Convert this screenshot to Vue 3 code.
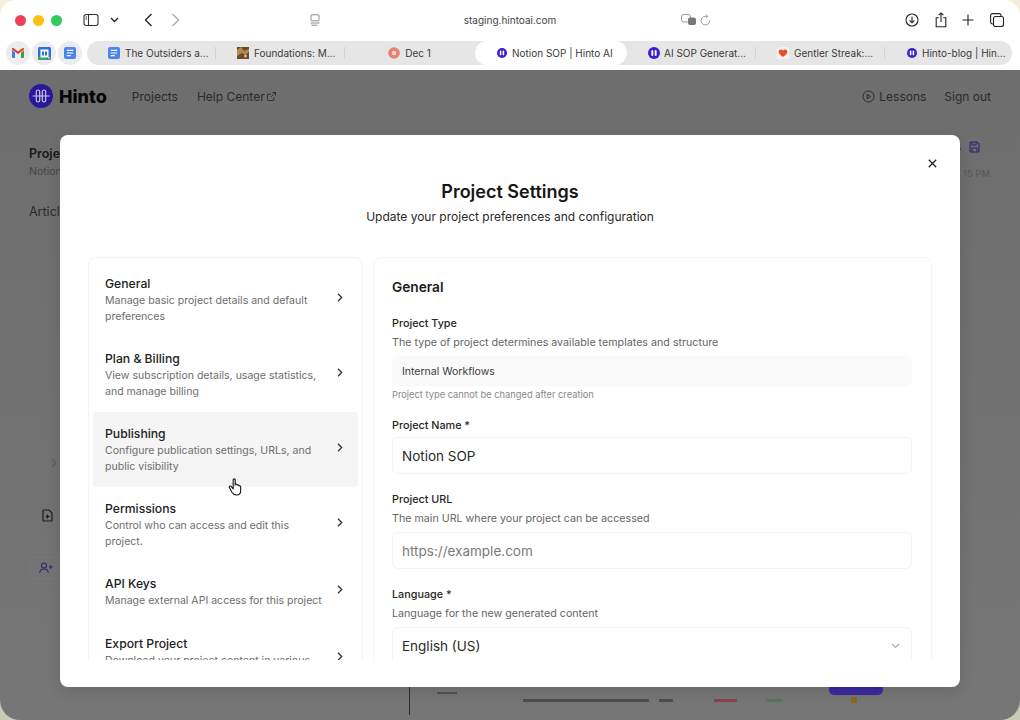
<script setup>
/**
 * Browser window with the Project Settings modal open
 */

const tabs = [
  { title: 'The Outsiders a...', icon: 'doc', sep: true },
  { title: 'Foundations: M...', icon: 'photo', sep: true },
  { title: 'Dec 1', icon: 'ring', center: true },
  { title: 'Notion SOP | Hinto AI', icon: 'hinto', active: true },
  { title: 'AI SOP Generat...', icon: 'hinto', sep: true, big: true },
  { title: 'Gentler Streak:...', icon: 'heart', sep: true },
  { title: 'Hinto-blog | Hin...', icon: 'hinto', last: true },
]

const sections = [
  { title: 'General', desc: 'Manage basic project details and default preferences' },
  { title: 'Plan & Billing', desc: 'View subscription details, usage statistics, and manage billing' },
  { title: 'Publishing', desc: 'Configure publication settings, URLs, and public visibility', hover: true },
  { title: 'Permissions', desc: 'Control who can access and edit this project.' },
  { title: 'API Keys', desc: 'Manage external API access for this project' },
  { title: 'Export Project', desc: 'Download your project content in various formats' },
]
</script>

<template>
  <div class="desk">
    <div class="window">
      <header class="chrome">
        <div class="toolbar">
          <div class="tool-left">
            <span class="light red"></span>
            <span class="light yellow"></span>
            <span class="light green"></span>
            <svg class="sidebar-icon" width="16" height="14" viewBox="0 0 16 14" fill="none" stroke="#333" stroke-width="1.1">
              <rect x="1" y="1.5" width="14" height="11" rx="2.2" />
              <path d="M5.5 1.5v11M2.6 4h1.4M2.6 6h1.4" />
            </svg>
            <svg class="menu-chevron" width="9" height="6" viewBox="0 0 9 6" fill="none" stroke="#222" stroke-width="1.3">
              <path d="M1 1l3.5 3.5L8 1" />
            </svg>
            <svg class="back" width="9" height="14" viewBox="0 0 9 14" fill="none" stroke="#222" stroke-width="1.3">
              <path d="M7.5 1L1.5 7l6 6" />
            </svg>
            <svg class="forward" width="9" height="14" viewBox="0 0 9 14" fill="none" stroke="#aaa" stroke-width="1.3">
              <path d="M1.5 1l6 6-6 6" />
            </svg>
          </div>
          <div class="address">
            <svg class="page-icon" width="10" height="12" viewBox="0 0 10 12" fill="none" stroke="#8a8a8a" stroke-width="1">
              <rect x="1" y="0.8" width="8" height="6" rx="0.8" />
              <path d="M0.5 9h9M1.5 11.2h6" />
            </svg>
            <span class="url">staging.hintoai.com</span>
            <svg class="translate" width="16" height="12" viewBox="0 0 16 12">
              <rect x="0.5" y="0.5" width="9" height="7.5" rx="2.5" fill="#fff" stroke="#999" />
              <rect x="7" y="3.5" width="8" height="7.5" rx="2" fill="#777" />
            </svg>
            <svg class="reload" width="11" height="12" viewBox="0 0 11 12" fill="none" stroke="#9a9a9a" stroke-width="1">
              <path d="M9.7 6.6A4.3 4.3 0 1 1 5.4 2.3h2" />
              <path d="M6 0.6l1.7 1.7L6 4" />
            </svg>
          </div>
          <div class="tool-right">
            <svg width="14" height="14" viewBox="0 0 14 14" fill="none" stroke="#222" stroke-width="1.1">
              <circle cx="7" cy="7" r="6" />
              <path d="M7 3.6v6M4.6 7.4L7 9.8l2.4-2.4" />
            </svg>
            <svg width="12" height="16" viewBox="0 0 12 16" fill="none" stroke="#222" stroke-width="1.1">
              <path d="M3.8 5.8H1.2v9h9.6v-9H8.2M6 10V1M3.6 3.2L6 0.9l2.4 2.3" />
            </svg>
            <svg width="12" height="12" viewBox="0 0 12 12" fill="none" stroke="#222" stroke-width="1.1">
              <path d="M6 0.5v11M0.5 6h11" />
            </svg>
            <svg width="14" height="14" viewBox="0 0 14 14" fill="none" stroke="#222" stroke-width="1.1">
              <rect x="3.5" y="3.5" width="10" height="10" rx="2" />
              <path d="M3.5 11H2.6A2 2 0 0 1 0.6 9V2.6a2 2 0 0 1 2-2H9a2 2 0 0 1 2 2v0.9" />
            </svg>
          </div>
        </div>

        <div class="tabbar">
          <div class="pinned">
            <span class="pin">
              <svg width="12" height="10" viewBox="0 0 12 10">
                <path d="M0 2v7a1 1 0 0 0 1 1h2V4.5z" fill="#3f7de8" />
                <path d="M12 2v7a1 1 0 0 1-1 1H9V4.5z" fill="#2ea44f" />
                <path d="M0 1.5L6 6l6-4.5V1a1 1 0 0 0-1.6-.8L6 3.5 1.6.2A1 1 0 0 0 0 1z" fill="#e0352b" />
                <path d="M9 3.4L12 1.2V2.6L9 4.8z" fill="#f5b91e" />
              </svg>
            </span>
            <span class="pin">
              <svg width="13" height="13" viewBox="0 0 13 13">
                <rect width="13" height="13" rx="1.5" fill="#2f6fe4" />
                <rect y="10" width="9" height="3" fill="#3aa757" />
                <path d="M10 10h3L10 13z" fill="#e9b21c" />
                <rect x="2.5" y="2.5" width="8" height="8" fill="#fff" />
                <rect x="4" y="4.5" width="2" height="4" fill="#2f6fe4" />
                <rect x="7" y="4.5" width="2" height="4" fill="#2f6fe4" />
              </svg>
            </span>
            <span class="pin">
              <svg width="12" height="12" viewBox="0 0 12 12">
                <rect width="12" height="12" rx="2" fill="#4b84ea" />
                <path d="M2.8 3.4h6.4M2.8 6h6.4M2.8 8.6h4" stroke="#fff" stroke-width="1.1" />
              </svg>
            </span>
          </div>

          <div class="tabs">
            <div
              v-for="tab in tabs"
              :key="tab.title"
              class="tab"
              :class="{ active: tab.active, sep: tab.sep, center: tab.center, last: tab.last, big: tab.big }"
            >
              <svg v-if="tab.icon === 'doc'" class="fav" width="12" height="12" viewBox="0 0 12 12">
                <rect width="12" height="12" rx="2" fill="#4b84ea" />
                <path d="M2.8 3.4h6.4M2.8 6h6.4M2.8 8.6h4" stroke="#fff" stroke-width="1.1" />
              </svg>
              <svg v-else-if="tab.icon === 'photo'" class="fav" width="12" height="12" viewBox="0 0 12 12">
                <rect width="12" height="12" fill="#6b4a2c" />
                <path d="M0 3l4-3 3 4 5-2v3L8 8l-3-2-5 3z" fill="#b08a4e" />
                <circle cx="8.5" cy="9" r="1.5" fill="#d8b878" />
              </svg>
              <svg v-else-if="tab.icon === 'ring'" class="fav" width="12" height="12" viewBox="0 0 12 12">
                <circle cx="6" cy="6" r="5.8" fill="#e9836f" />
                <circle cx="6" cy="6" r="2.2" fill="#f7d9d2" />
              </svg>
              <svg v-else-if="tab.icon === 'heart'" class="fav" width="12" height="12" viewBox="0 0 12 12">
                <rect width="12" height="12" rx="1.5" fill="#fbf3ef" />
                <path d="M6 10C3 8 1.6 6.6 1.6 4.8 1.6 3.5 2.6 2.6 3.7 2.6c1 0 1.8.5 2.3 1.2.5-.7 1.3-1.2 2.3-1.2 1.1 0 2.1.9 2.1 2.2C10.4 6.6 9 8 6 10z" fill="#e8502c" />
              </svg>
              <svg v-else class="fav" :width="tab.big ? 12 : 10" :height="tab.big ? 12 : 10" viewBox="0 0 10 10">
                <circle cx="5" cy="5" r="5" fill="#3d1fd1" />
                <rect x="2.8" y="2.6" width="1.6" height="4.8" rx="0.8" fill="#fff" />
                <rect x="5.6" y="2.6" width="1.6" height="4.8" rx="0.8" fill="#fff" />
              </svg>
              <span class="tab-title">{{ tab.title }}</span>
            </div>
          </div>
        </div>
      </header>

      <main class="page">
        <nav class="topnav">
          <div class="brand">
            <svg width="24" height="24" viewBox="0 0 24 24">
              <circle cx="12" cy="12" r="12" fill="#2a189a" />
              <rect x="7.3" y="6" width="3.4" height="12" rx="1.7" fill="none" stroke="#c9c6e6" stroke-width="1.2" />
              <rect x="13.3" y="6" width="3.4" height="12" rx="1.7" fill="none" stroke="#c9c6e6" stroke-width="1.2" />
              <path d="M3.5 12h17" stroke="#c9c6e6" stroke-width="1" />
            </svg>
            <span class="brand-name">Hinto</span>
          </div>
          <a class="nav-link">Projects</a>
          <a class="nav-link help">
            Help Center
            <svg width="9" height="9" viewBox="0 0 9 9" fill="none" stroke="#2b2b2b" stroke-width="0.9">
              <path d="M6.8 5.2v2.6a.7.7 0 0 1-.7.7H1.2a.7.7 0 0 1-.7-.7V2.9a.7.7 0 0 1 .7-.7h2.600M5.4.5h3.100v3.100M8.500.5L4 5" />
            </svg>
          </a>
          <div class="nav-right">
            <a class="nav-link lessons">
              <svg width="13" height="13" viewBox="0 0 13 13" fill="none" stroke="#2b2b2b" stroke-width="1">
                <circle cx="6.5" cy="6.5" r="5.5" />
                <path d="M5.2 4.2l3.2 2.3-3.2 2.3z" />
              </svg>
              Lessons
            </a>
            <a class="nav-link">Sign out</a>
          </div>
        </nav>

        <div class="behind">
          <div class="behind-left">
            <div class="behind-title">Project</div>
            <div class="behind-sub">Notion SOP</div>
            <div class="behind-articles">Articles</div>
            <svg class="behind-chevron" width="6" height="10" viewBox="0 0 6 10" fill="none" stroke="#5c5c5c" stroke-width="1.2">
              <path d="M1 1l4 4-4 4" />
            </svg>
            <svg class="behind-doc" width="11" height="13" viewBox="0 0 11 13" fill="none" stroke="#1c1c1c" stroke-width="1.2">
              <path d="M1 2a1 1 0 0 1 1-1h5l3 3v7a1 1 0 0 1-1 1H2a1 1 0 0 1-1-1zM5.5 5.5v4M3.5 7.500h4" />
            </svg>
            <div class="behind-invite">
              <svg width="14" height="12" viewBox="0 0 14 12" fill="none" stroke="#2c2570" stroke-width="1.1">
                <circle cx="5" cy="3.5" r="2.5" />
                <path d="M0.8 11c0-2.4 1.9-4 4.2-4s4.2 1.6 4.2 4M10 5h3.500M11.7 3.3v3.400" />
              </svg>
            </div>
          </div>
          <div class="behind-right">
            <div class="behind-save">
              <span>Changes</span>
              <svg width="11" height="12" viewBox="0 0 11 12" fill="none" stroke="#2c2570" stroke-width="1.1">
                <path d="M1 2a1 1 0 0 1 1-1h6l2 2v7a1 1 0 0 1-1 1H2a1 1 0 0 1-1-1zM3 1v3h4V1M3 11V7h5v4" />
              </svg>
            </div>
            <span class="behind-time">15 PM</span>
          </div>
        </div>

        <div class="strip">
          <span class="strip-rule"></span>
          <span class="strip-note"></span>
          <span class="strip-bar row-text"></span>
          <span class="strip-bar row-size"></span>
          <span class="strip-bar red-bar"></span>
          <span class="strip-bar green-bar"></span>
          <span class="strip-dot"></span>
          <span class="strip-btn"></span>
        </div>

        <section class="modal">
          <svg class="close" width="9" height="9" viewBox="0 0 9 9" fill="none" stroke="#222" stroke-width="1.3">
            <path d="M0.8 0.8l7.4 7.4M8.2 0.8L0.8 8.2" />
          </svg>
          <h2 class="modal-title">Project Settings</h2>
          <p class="modal-sub">Update your project preferences and configuration</p>

          <div class="columns">
            <aside class="side">
              <div
                v-for="item in sections"
                :key="item.title"
                class="side-item"
                :class="{ hover: item.hover }"
              >
                <div class="side-text">
                  <div class="side-title">{{ item.title }}</div>
                  <div class="side-desc">{{ item.desc }}</div>
                </div>
                <svg class="side-chevron" width="6" height="9" viewBox="0 0 6 9" fill="none" stroke="#333" stroke-width="1.3">
                  <path d="M1 0.8l3.7 3.7L1 8.2" />
                </svg>
              </div>
            </aside>

            <div class="panel">
              <h3 class="panel-title">General</h3>

              <label class="label first">Project Type</label>
              <p class="help-text">The type of project determines available templates and structure</p>
              <div class="field readonly">Internal Workflows</div>
              <p class="hint">Project type cannot be changed after creation</p>

              <label class="label name">Project Name *</label>
              <div class="field large">Notion SOP</div>

              <label class="label url-label">Project URL</label>
              <p class="help-text">The main URL where your project can be accessed</p>
              <div class="field large placeholder">https://example.com</div>

              <label class="label lang">Language *</label>
              <p class="help-text">Language for the new generated content</p>
              <div class="field large select">
                English (US)
                <svg width="9" height="6" viewBox="0 0 9 6" fill="none" stroke="#aaa" stroke-width="1.1">
                  <path d="M1 1l3.5 3.5L8 1" />
                </svg>
              </div>
            </div>
          </div>

          <svg class="cursor" width="16" height="19" viewBox="0 0 16 19">
            <path
              d="M5.2 1.8c0-1.3 2-1.3 2 0v5.4l.3-1c.9-.4 1.7 0 1.8.8.8-.4 1.6 0 1.7.9.8-.3 1.7.2 1.7 1.2v3.3c0 2.600-1.7 4.600-4.300 4.600-2.400 0-3.500-1-4.500-2.700L1.400 9.600c-.7-1.200.8-2.200 1.700-1.200l2.100 2.400z"
              fill="#fff"
              stroke="#111"
              stroke-width="1.1"
              stroke-linejoin="round"
            />
          </svg>
        </section>
      </main>
    </div>
  </div>
</template>

<style>
html,
body {
  margin: 0;
  overflow: hidden;
}
</style>

<style scoped>
.desk {
  width: 1020px;
  height: 720px;
  overflow: hidden;
  background: linear-gradient(180deg, #f3efdc 0%, #e3e0cd 40%, #c6cbb6 100%);
  font-family: Inter, "Liberation Sans", sans-serif;
  color: #1f1f1f;
}

.window {
  height: 720px;
  display: flex;
  flex-direction: column;
  border-radius: 16px 16px 20px 20px;
  overflow: hidden;
}

.chrome {
  height: 70px;
  flex: none;
  background: #fff;
}

.toolbar {
  height: 41px;
  padding-bottom: 1px;
  box-sizing: border-box;
  display: flex;
  align-items: center;
}

.tool-left {
  width: 304px;
  flex: none;
  display: flex;
  align-items: center;
  padding-left: 15px;
  box-sizing: border-box;
}

.light {
  width: 11px;
  height: 11px;
  border-radius: 50%;
  margin-right: 7px;
}

.red {
  background: #ef4058;
}

.yellow {
  background: #fcc20f;
}

.green {
  background: #30cb58;
}

.sidebar-icon {
  margin-left: 14px;
}

.menu-chevron {
  margin-left: 11px;
}

.back {
  margin-left: 25px;
}

.forward {
  margin-left: 18px;
}

.address {
  width: 411px;
  flex: none;
  height: 26px;
  display: flex;
  align-items: center;
  padding-left: 6px;
  box-sizing: border-box;
}

.url {
  margin-left: 141px;
  font-size: 10px;
  color: #444;
  width: 98px;
  text-align: center;
  white-space: nowrap;
}

.translate {
  margin-left: 122px;
}

.reload {
  margin-left: 3px;
}

.tool-right {
  flex: 1;
  display: flex;
  align-items: center;
  justify-content: flex-end;
  gap: 15px;
  padding-right: 16px;
}

.tool-right svg:first-child {
  margin-right: 1px;
}

.tool-right svg:nth-child(3) {
  margin-right: 1px;
}

.tabbar {
  height: 24px;
  display: flex;
  align-items: center;
}

.pinned {
  width: 87px;
  flex: none;
  display: flex;
  gap: 2px;
  padding-left: 6px;
  box-sizing: border-box;
}

.pin {
  width: 24px;
  height: 24px;
  border-radius: 50%;
  background: #ececee;
  display: flex;
  align-items: center;
  justify-content: center;
}

.tabs {
  width: 925px;
  height: 24px;
  display: flex;
  border-radius: 12px;
  background: #e6e6e6;
}

.tab {
  width: 129px;
  flex: none;
  box-sizing: border-box;
  padding-left: 21px;
  display: flex;
  align-items: center;
  gap: 5px;
  font-size: 10px;
  color: #3a3a3a;
  white-space: nowrap;
  position: relative;
}

.tab.sep::after {
  content: "";
  position: absolute;
  right: 0;
  top: 6px;
  bottom: 6px;
  width: 1px;
  background: #d2d2d2;
}

.tab.center {
  justify-content: center;
  padding-left: 0;
}

.tab.active {
  width: 152px;
  background: #fff;
  border-radius: 12px;
  padding-left: 22px;
  margin-left: 1px;
}

.tab.big {
  gap: 4px;
}

.tab.last {
  width: 124px;
  padding-left: 22px;
}

.page {
  flex: 1;
  position: relative;
  display: flex;
  flex-direction: column;
  background: linear-gradient(180deg, #6e6e6e 0%, #727272 60%, #767676 100%);
}

.topnav {
  height: 52px;
  flex: none;
  display: flex;
  align-items: center;
  padding: 0 29px;
  font-size: 12px;
}

.brand {
  display: flex;
  align-items: center;
  gap: 6px;
  margin-right: 25px;
}

.brand-name {
  font-size: 18px;
  font-weight: 800;
  color: #050505;
}

.nav-link {
  color: #2b2b2b;
  display: flex;
  align-items: center;
  gap: 2px;
}

.help {
  margin-left: 19px;
}

.nav-right {
  margin-left: auto;
  display: flex;
  align-items: center;
  gap: 18px;
}

.lessons {
  gap: 4px;
}

.behind {
  flex: 1;
  display: flex;
  justify-content: space-between;
  padding: 0 30px 0 29px;
}

.behind-left {
  padding-top: 24px;
}

.behind-title {
  font-size: 12.5px;
  font-weight: 600;
  line-height: 16px;
  color: #1a1a1a;
}

.behind-sub {
  margin-top: 3px;
  font-size: 10.5px;
  line-height: 14px;
  color: #444;
}

.behind-articles {
  margin-top: 25px;
  font-size: 12.5px;
  line-height: 16px;
  color: #2a2a2a;
}

.behind-chevron {
  display: block;
  margin: 238px 0 0 22px;
}

.behind-doc {
  display: block;
  margin: 41px 0 0 13px;
}

.behind-invite {
  margin: 35px 0 0 0;
  width: 34px;
  height: 22px;
  border: 1px solid #777780;
  border-radius: 4px;
  display: flex;
  align-items: center;
  padding-left: 9px;
  box-sizing: border-box;
}

.behind-right {
  display: flex;
  flex-direction: column;
  align-items: flex-end;
  padding-top: 19px;
}

.behind-save {
  display: flex;
  align-items: center;
  gap: 8px;
  margin-right: 10px;
  font-size: 11px;
  line-height: 12px;
  color: #2c2570;
}

.behind-time {
  margin-top: 15px;
  font-size: 9.5px;
  color: #585858;
}

.strip {
  height: 33px;
  flex: none;
  display: flex;
  padding-left: 409px;
  position: relative;
}

.strip-rule {
  width: 1px;
  height: 28px;
  background: #2e2e2e;
  margin-right: 113px;
}

.strip-bar {
  height: 3px;
  margin-top: 12px;
  background: #4d4d4d;
  border-radius: 1px;
  filter: blur(0.6px);
}

.strip-note {
  position: absolute;
  left: 437px;
  top: 5px;
  width: 20px;
  height: 2px;
  background: #525252;
  filter: blur(0.6px);
}

.row-text {
  width: 126px;
}

.row-size {
  width: 14px;
  margin-left: 10px;
}

.red-bar {
  width: 23px;
  margin-left: 41px;
  background: #8a3f50;
}

.green-bar {
  width: 16px;
  margin-left: 29px;
  background: #4f7a58;
}

.strip-dot {
  position: absolute;
  left: 851px;
  top: 10px;
  width: 6px;
  height: 6px;
  background: #8a6a1e;
  filter: blur(0.6px);
}

.strip-btn {
  position: absolute;
  left: 829px;
  top: -3px;
  width: 54px;
  height: 11px;
  background: #3a2aa0;
  border-radius: 5px;
}

.modal {
  position: absolute;
  left: 60px;
  top: 65px;
  width: 900px;
  height: 552px;
  box-sizing: border-box;
  background: #fff;
  border-radius: 8px;
  padding: 0 28px;
  box-shadow: 0 4px 16px rgba(0, 0, 0, 0.12);
  display: flex;
  flex-direction: column;
  overflow: hidden;
}

.close {
  position: absolute;
  left: 868px;
  top: 24px;
}

.modal-title {
  margin: 46px 0 0;
  font-size: 18px;
  line-height: 22px;
  font-weight: 600;
  text-align: center;
  color: #161616;
}

.modal-sub {
  margin: 5px 0 0;
  font-size: 12px;
  line-height: 18px;
  text-align: center;
  color: #2a2a2a;
}

.columns {
  margin-top: 31px;
  height: 403px;
  display: flex;
  gap: 10px;
  overflow: hidden;
  flex: none;
}

.side {
  width: 275px;
  flex: none;
  box-sizing: border-box;
  border: 1px solid #f4f4f4;
  border-bottom: 0;
  border-radius: 8px 8px 0 0;
  padding: 4px 4px 0;
  overflow: hidden;
}

.side-item {
  display: flex;
  align-items: center;
  justify-content: space-between;
  padding: 14px 15px 13px 12px;
  border-radius: 4px;
}

.side-item.hover {
  background: #f5f5f5;
}

.side-text {
  width: 220px;
}

.side-title {
  font-size: 12.2px;
  line-height: 16px;
  font-weight: 500;
  color: #222;
  margin-bottom: 1px;
}

.side-desc {
  font-size: 10.55px;
  line-height: 15.5px;
  color: #6e6e6e;
}

.side-chevron {
  margin-bottom: 6px;
}

.panel {
  flex: 1;
  box-sizing: border-box;
  border: 1px solid #f6f6f6;
  border-bottom: 0;
  border-radius: 8px 8px 0 0;
  padding: 20px 20px 0 18px;
  overflow: hidden;
}

.panel-title {
  margin: 0;
  font-size: 13.7px;
  line-height: 18px;
  font-weight: 600;
  color: #1c1c1c;
}

.label {
  display: block;
  padding-top: 1px;
  font-size: 10.8px;
  line-height: 14px;
  font-weight: 500;
  color: #262626;
}

.first {
  margin-top: 20px;
}

.name {
  margin-top: 17px;
}

.name + .field {
  margin-top: 4px;
}

.url-label {
  margin-top: 18px;
}

.lang {
  margin-top: 18px;
}

.help-text {
  margin: 5px 0 0;
  font-size: 10.7px;
  line-height: 14px;
  color: #666;
}

.hint {
  margin: 3px 0 0;
  font-size: 9.3px;
  line-height: 12px;
  color: #8a8a8a;
}

.field {
  box-sizing: border-box;
  width: 520px;
  height: 37px;
  margin-top: 6px;
  padding: 0 9px;
  display: flex;
  align-items: center;
  justify-content: space-between;
  border: 1px solid #f4f4f4;
  border-radius: 6px;
}

.readonly {
  height: 30px;
  background: #fafafa;
  border-color: #f8f8f8;
  font-size: 10.5px;
  color: #3a3a3a;
}

.large {
  font-size: 13.5px;
  color: #2a2a2a;
}

.placeholder {
  color: #7a7a7a;
}

.select svg {
  margin-right: 2px;
}

.cursor {
  position: absolute;
  left: 168px;
  top: 343px;
}
</style>
